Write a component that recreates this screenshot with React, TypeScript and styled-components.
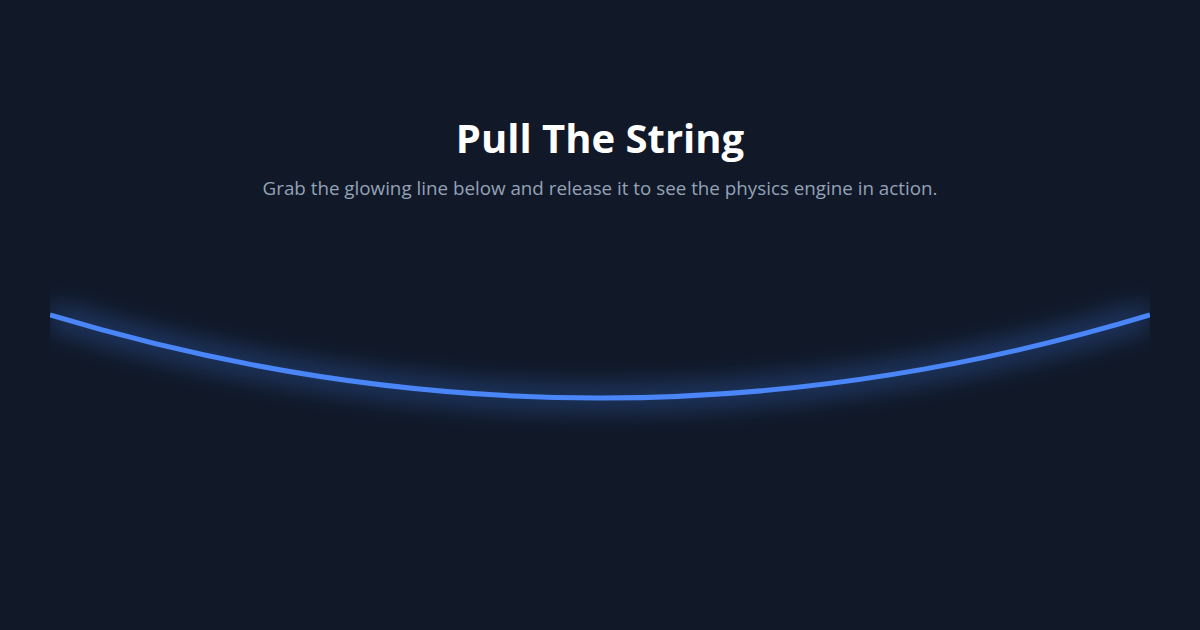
import React from "react";
import styled, { createGlobalStyle } from "styled-components";

const Global = createGlobalStyle`
  html, body { margin: 0; padding: 0; background: #111827; }
  body { font-family: "Open Sans", "Noto Sans", sans-serif; }
`;

const Page = styled.main`
  width: 1200px;
  height: 630px;
  box-sizing: border-box;
  padding: 114px 50px 0;
  display: flex;
  flex-direction: column;
  align-items: center;
  background: #111827;
  overflow: hidden;
`;

const Title = styled.h1`
  margin: 0;
  font-size: 40px;
  line-height: 48px;
  font-weight: 700;
  color: #ffffff;
  letter-spacing: 0px;
`;

const Subtitle = styled.p`
  margin: 13px 0 0;
  font-size: 18.8px;
  line-height: 27px;
  color: #94a3b8;
`;

const Stage = styled.svg`
  display: block;
  margin-top: 28px;
  width: 1100px;
  height: 300px;
  overflow: hidden;
`;

export default function App() {
  return (
    <>
      <Global />
      <Page>
        <Title>Pull The String</Title>
        <Subtitle>
          Grab the glowing line below and release it to see the physics engine in action.
        </Subtitle>
        <Stage viewBox="0 0 1100 300">
          <defs>
            <filter id="glow" x="-10%" y="-100%" width="120%" height="300%">
              <feGaussianBlur in="SourceGraphic" stdDeviation="14" />
            </filter>
          </defs>
          <path
            d="M0,85 Q550,251 1100,85"
            fill="none"
            stroke="#3b82f6"
            strokeOpacity="0.55"
            strokeWidth="14"
            filter="url(#glow)"
          />
          <path
            d="M0,85 Q550,251 1100,85"
            fill="none"
            stroke="#4a86f8"
            strokeWidth="5"
          />
        </Stage>
      </Page>
    </>
  );
}
